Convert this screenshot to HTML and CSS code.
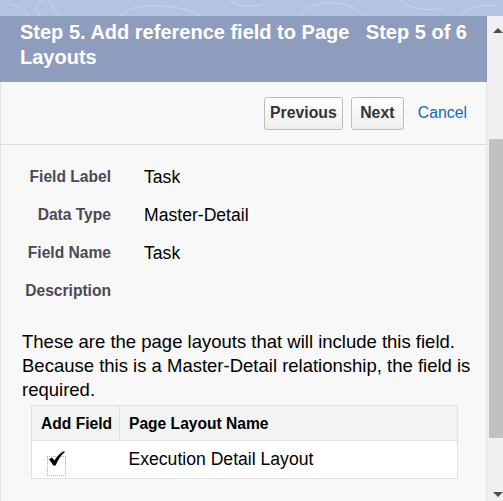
FILE: index.html
```html
<!DOCTYPE html>
<html>
<head>
<meta charset="utf-8">
<link rel="stylesheet" href="styles.css">
</head>
<body>
<div class="strip">
  <svg class="texture" width="503" height="16" viewBox="0 0 503 16">
    <path d="M40 16 C 34 8, 36 3, 44 0" />
    <path d="M60 16 C 52 9, 54 4, 48 0" />
    <path d="M120 16 C 126 9, 140 5, 160 6 S 190 10, 200 16" />
    <path d="M230 0 C 236 6, 250 8, 262 4" />
    <path d="M300 16 C 306 6, 320 2, 336 3 S 358 12, 364 16" />
    <path d="M400 0 C 408 8, 424 12, 444 8" />
    <path d="M460 16 C 466 8, 480 4, 496 6" />
    <path d="M10 4 C 20 6, 26 10, 28 16" />
  </svg>
</div>
<div class="main">
  <div class="panel">
    <div class="header">
      <div class="title">Step 5. Add reference field to Page Layouts</div>
      <div class="step">Step 5 of 6</div>
    </div>
    <div class="body">
      <div class="toolbar">
        <button class="btn">Previous</button>
        <button class="btn">Next</button>
        <a class="cancel" href="#">Cancel</a>
      </div>
      <div class="fields">
        <div class="label">Field Label</div><div class="value">Task</div>
        <div class="label">Data Type</div><div class="value">Master-Detail</div>
        <div class="label">Field Name</div><div class="value">Task</div>
        <div class="label">Description</div><div class="value"></div>
      </div>
      <p class="note">These are the page layouts that will include this field. Because this is a Master-Detail relationship, the field is required.</p>
      <table class="layouts">
        <thead>
          <tr><th class="c1">Add Field</th><th class="c2">Page Layout Name</th></tr>
        </thead>
        <tbody>
          <tr>
            <td class="c1"><span class="chk"><svg class="tick" width="16" height="15" viewBox="0 0 16 15"><path d="M0 8.2 L3 6.4 L5.4 9.4 C 8 5.4, 11 2.2, 15.2 0 L15.8 0.9 C 12 4, 9 8.4, 6.6 14.6 L4.4 14.6 Z"/></svg></span></td>
            <td class="c2">Execution Detail Layout</td>
          </tr>
        </tbody>
      </table>
    </div>
  </div>
  <div class="scrollbar">
    <div class="arrow-up"></div>
    <div class="thumb"></div>
    <div class="arrow-down"></div>
  </div>
</div>
</body>
</html>
```

FILE: styles.css
```css
html, body {
  margin: 0;
  padding: 0;
  height: 501px;
  overflow: hidden;
}
body {
  font-family: "Liberation Sans", Arial, sans-serif;
  background: #f8f8f8;
}
.strip {
  height: 16px;
  background: #b2c4df;
}
.texture {
  display: block;
}
.texture path {
  fill: none;
  stroke: rgba(255, 255, 255, 0.28);
  stroke-width: 1;
}
.main {
  display: flex;
  height: 485px;
}
.panel {
  width: 487px;
  flex: none;
  display: flex;
  flex-direction: column;
}
.header {
  background: #8e9cbe;
  color: #fff;
  font-weight: bold;
  font-size: 20px;
  line-height: 25px;
  display: flex;
  gap: 16px;
  padding: 4px 20px 12px 20px;
  height: 50px;
}
.title {
  flex: 1;
}
.step {
  flex: none;
}
.body {
  flex: 1;
  border-left: 1px solid #e4e4e4;
  border-right: 1px solid #e2e2e2;
  background: #f8f8f8;
}
.toolbar {
  display: flex;
  justify-content: flex-end;
  align-items: center;
  height: 62px;
  padding-right: 19px;
  border-bottom: 1px solid #dadada;
  box-shadow: 0 1px 0 #fdfdfd;
}
.btn {
  font-family: "Liberation Sans", Arial, sans-serif;
  font-weight: bold;
  font-size: 15.8px;
  color: #333;
  height: 33px;
  min-width: 53px;
  padding: 0 5px;
  margin: 0 8px 0 0;
  border: 1px solid #bdbdbd;
  border-radius: 3px;
  background: linear-gradient(#ffffff, #eeeeee);
  box-sizing: border-box;
}
.btn + .btn {
  margin-right: 14px;
}
.cancel {
  font-size: 15.8px;
  color: #1467bd;
  text-decoration: none;
}
.fields {
  display: grid;
  grid-template-columns: 110px 1fr;
  grid-auto-rows: 38px;
  column-gap: 33px;
  align-items: center;
  padding-top: 13px;
}
.label {
  text-align: right;
  font-weight: bold;
  font-size: 15.6px;
  color: #4a4a56;
}
.value {
  font-size: 17.6px;
  color: #000;
}
.note {
  margin: 20px 0 0 21px;
  width: 460px;
  font-size: 18.5px;
  line-height: 24px;
  color: #000;
}
.layouts {
  margin: 3px 0 0 30px;
  width: 427px;
  border-collapse: collapse;
  border: 1px solid #e0e3e5;
}
.layouts th {
  background: #f2f3f3;
  font-weight: bold;
  font-size: 15.6px;
  color: #000;
  text-align: left;
  height: 35px;
  padding: 2px 0 0 9px;
  border-bottom: 1px solid #e0e3e5;
  box-sizing: border-box;
}
.layouts th.c1 {
  border-right: 1px solid #e0e3e5;
  width: 88px;
}
.layouts td {
  background: #fff;
  height: 37px;
  font-size: 17.6px;
  color: #000;
  padding: 0 0 0 9px;
}
.layouts td.c1 {
  padding-left: 15px;
}
.chk {
  display: block;
  position: relative;
  width: 17px;
  height: 18px;
  border: 1px dotted #b0b0b0;
  margin-top: 12px;
}
.tick {
  position: absolute;
  left: 1px;
  top: -6px;
  fill: #000;
}
.scrollbar {
  flex: 1;
  background: #f0f0f0;
  display: flex;
  flex-direction: column;
  align-items: flex-end;
}
.arrow-up {
  margin-top: 12px;
  width: 0;
  height: 0;
  border-left: 5px solid transparent;
  border-right: 5px solid transparent;
  border-bottom: 5px solid #505050;
}
.thumb {
  margin-top: 106px;
  width: 14px;
  height: 299px;
  background: #c1c1c1;
}
.arrow-down {
  margin-top: auto;
  margin-bottom: 4px;
  width: 0;
  height: 0;
  border-left: 5px solid transparent;
  border-right: 5px solid transparent;
  border-top: 5px solid #505050;
}
```
